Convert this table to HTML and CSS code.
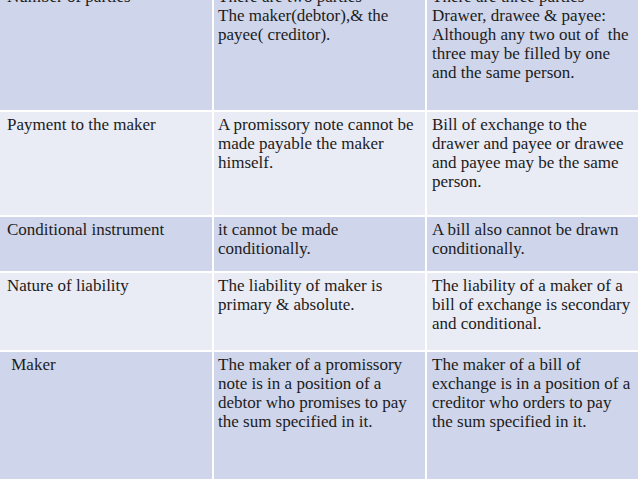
FILE: index.html
```html
<!DOCTYPE html>
<html lang="en">
<head>
<meta charset="utf-8">
<title>Promissory note vs Bill of exchange</title>
<link rel="stylesheet" href="styles.css">
</head>
<body>
<div class="table">
  <div class="cell dark c1">Number of parties</div>
  <div class="cell dark">There are two parties<br>The maker(debtor),&amp; the<br>payee( creditor).</div>
  <div class="cell dark c3">There are three parties<br>Drawer, drawee &amp; payee:<br>Although any two out of&nbsp; the<br>three may be filled by one<br>and the same person.</div>

  <div class="cell light c1">Payment to the maker</div>
  <div class="cell light">A promissory note cannot be<br>made payable the maker<br>himself.</div>
  <div class="cell light c3">Bill of exchange to the<br>drawer and payee or drawee<br>and payee may be the same<br>person.</div>

  <div class="cell dark c1">Conditional instrument</div>
  <div class="cell dark">it cannot be made<br>conditionally.</div>
  <div class="cell dark c3">A bill also cannot be drawn<br>conditionally.</div>

  <div class="cell light c1">Nature of liability</div>
  <div class="cell light">The liability of maker is<br>primary &amp; absolute.</div>
  <div class="cell light c3">The liability of a maker of a<br>bill of exchange is secondary<br>and conditional.</div>

  <div class="cell dark c1">&nbsp;Maker</div>
  <div class="cell dark">The maker of a promissory<br>note is in a position of a<br>debtor who promises to pay<br>the sum specified in it.</div>
  <div class="cell dark c3">The maker of a bill of<br>exchange is in a position of a<br>creditor who orders to pay<br>the sum specified in it.</div>
</div>
</body>
</html>
```

FILE: styles.css
```css
html, body {
  margin: 0;
  padding: 0;
  background: #ffffff;
  overflow: hidden;
}

.table {
  display: grid;
  width: 638px;
  margin-top: -16px;
  grid-template-columns: 212px 211px 211px;
  grid-template-rows: 126px 103px 54px 77px 140px;
  gap: 2px;
  background: #ffffff;
}

.cell {
  padding: 3px 3px 0 4px;
  font-family: "Liberation Serif", "Times New Roman", serif;
  font-size: 17px;
  line-height: 19px;
  color: #1c1c1c;
  white-space: nowrap;
  overflow: hidden;
}

.c1 {
  padding-left: 7px;
}

.c3 {
  padding-left: 5px;
}

.dark {
  background: #cfd5ea;
}

.light {
  background: #e9ebf5;
}
```
